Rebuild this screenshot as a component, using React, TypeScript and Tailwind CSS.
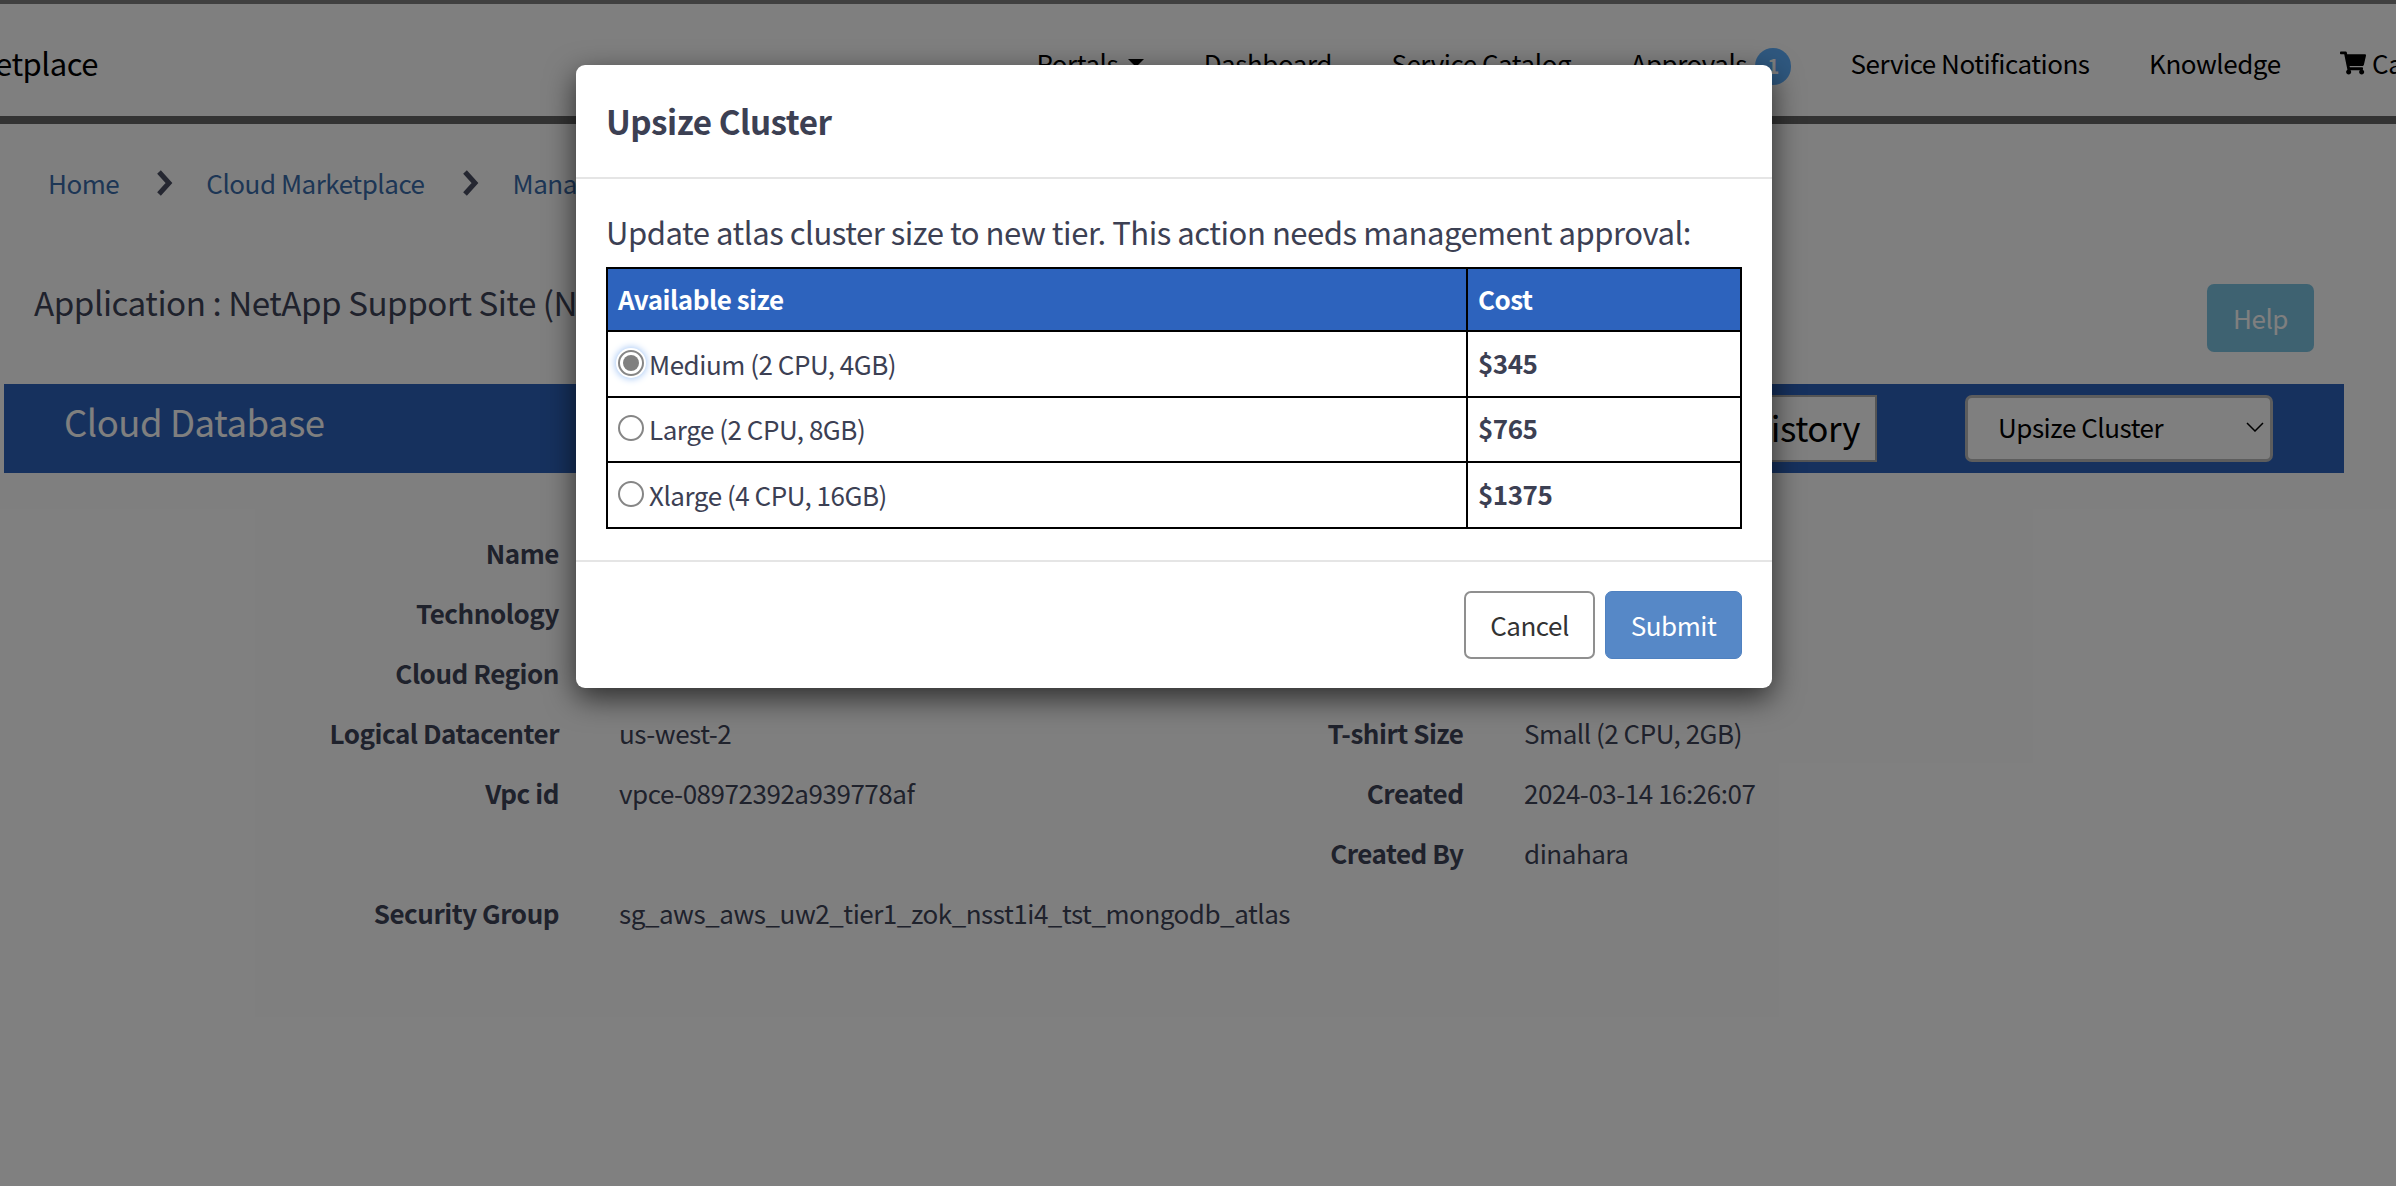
import { FaShoppingCart } from "react-icons/fa";

const navItems = ["Dashboard", "Service Catalog"];

const detailRows = [
  { label: "Name", value: "", label2: "", value2: "" },
  { label: "Technology", value: "", label2: "", value2: "" },
  { label: "Cloud Region", value: "", label2: "", value2: "" },
  { label: "Logical Datacenter", value: "us-west-2", label2: "T-shirt Size", value2: "Small (2 CPU, 2GB)" },
  { label: "Vpc id", value: "vpce-08972392a939778af", label2: "Created", value2: "2024-03-14 16:26:07" },
  { label: "", value: "", label2: "Created By", value2: "dinahara" },
  { label: "Security Group", value: "sg_aws_aws_uw2_tier1_zok_nsst1i4_tst_mongodb_atlas", label2: "", value2: "" },
];

const sizes = [
  { name: "Medium (2 CPU, 4GB)", cost: "$345", selected: true },
  { name: "Large (2 CPU, 8GB)", cost: "$765", selected: false },
  { name: "Xlarge (4 CPU, 16GB)", cost: "$1375", selected: false },
];

function Chevron() {
  return (
    <svg width="17" height="26" viewBox="0 0 17 26" className="shrink-0">
      <path d="M3 2 L13 13 L3 24" fill="none" stroke="#4a4f63" strokeWidth="5" />
    </svg>
  );
}

function Radio({ selected }: { selected: boolean }) {
  return (
    <span
      className={`mt-[4px] flex h-[26px] w-[26px] shrink-0 items-center justify-center rounded-full border-2 border-[#868686] bg-white ${
        selected ? "shadow-[0_0_0_2px_#fff,0_0_7px_3px_#a9c9f5]" : ""
      }`}
    >
      {selected && <span className="h-[16px] w-[16px] rounded-full bg-[#808080]" />}
    </span>
  );
}

function SizeModal() {
  return (
    <div className="absolute left-[576px] top-[65px] z-20 w-[1196px] rounded-[9px] bg-white text-[#3c4053] shadow-[0_10px_30px_rgba(0,0,0,0.65)]">
      <div className="flex h-[114px] items-center border-b-2 border-[#e5e5e5] pl-[30px]">
        <h2 className="text-[33.2px] font-bold leading-[40px]">Upsize Cluster</h2>
      </div>
      <div className="border-b-2 border-[#e5e5e5] px-[30px] pb-[31px]">
        <p className="pt-[33px] text-[31.05px] leading-[40px] whitespace-nowrap">
          Update atlas cluster size to new tier. This action needs management approval:
        </p>
        <table className="mt-[15px] w-[1136px] table-fixed border-collapse border-2 border-black text-[26px] leading-[36px]">
          <thead>
            <tr className="h-[63px] bg-[#2d63bd] text-white">
              <th className="w-[860px] border-2 border-black px-[10px] pb-[2px] text-left font-bold">Available size</th>
              <th className="border-2 border-black px-[10px] pb-[2px] text-left font-bold">Cost</th>
            </tr>
          </thead>
          <tbody>
            {sizes.map((size) => (
              <tr key={size.name} className="h-[65.5px]">
                <td className="border-2 border-black px-[10px]">
                  <div className="flex items-start gap-[5px]">
                    <Radio selected={size.selected} />
                    <span>{size.name}</span>
                  </div>
                </td>
                <td className="border-2 border-black px-[10px] pb-[2px] font-bold">{size.cost}</td>
              </tr>
            ))}
          </tbody>
        </table>
      </div>
      <div className="flex justify-end gap-[10px] px-[30px] py-[29px] text-[26px] leading-[36px]">
        <button className="h-[68px] w-[131px] rounded-[7px] border-2 border-[#8f8f8f] bg-white text-[#333]">Cancel</button>
        <button className="h-[68px] w-[137px] rounded-[7px] border border-[#4f81c0] bg-[#5688c7] text-white">Submit</button>
      </div>
    </div>
  );
}

export default function App() {
  return (
    <div className="relative h-[1186px] w-full overflow-hidden bg-white font-['Noto_Sans_CJK_SC','Noto_Sans',sans-serif] tracking-[-0.47px] text-[#3f4459]">
      <header className="flex h-[124px] items-center border-t-4 border-b-8 border-t-[#808080] border-b-[#666] pt-[6px] whitespace-nowrap text-[26px] leading-[36px] text-black">
        <div className="flex w-[98px] shrink-0 justify-end overflow-hidden text-[31px] leading-[44px]">
          <span>Cloud Marketplace</span>
        </div>
        <nav className="ml-[938.5px] flex shrink-0 items-center gap-[59.5px]">
          <span className="flex items-center gap-[10px]">
            Portals
            <span className="h-0 w-0 border-x-[8px] border-t-[8px] border-x-transparent border-t-black" />
          </span>
          {navItems.map((item) => (
            <span key={item}>{item}</span>
          ))}
          <span className="flex items-center gap-[8px]">
            Approvals
            <span className="mt-[6px] flex h-[37px] w-[36px] items-center justify-center rounded-full bg-[#5eb0ff] text-[20px] font-bold text-white">
              1
            </span>
          </span>
          <span>Service Notifications</span>
          <span>Knowledge</span>
          <span className="flex items-center gap-[6px]">
            <FaShoppingCart className="h-[26px] w-[26px]" />
            Cart
          </span>
        </nav>
      </header>

      <div className="ml-[48px] mt-[39px] flex h-[40px] items-center whitespace-nowrap text-[26px] leading-[36px] text-[#3a6cab]">
        <span>Home</span>
        <span className="ml-[37px] mr-[33px]">
          <Chevron />
        </span>
        <span>Cloud Marketplace</span>
        <span className="ml-[37px] mr-[34px]">
          <Chevron />
        </span>
        <span>Manage Services</span>
      </div>

      <div className="mt-[81px] flex h-[68px] items-start pl-[34px]">
        <h1 className="-mt-[2px] whitespace-nowrap text-[33.2px] leading-[40px]">Application : NetApp Support Site (NSS)</h1>
        <button className="ml-auto mr-[82px] h-[68px] w-[107px] rounded-[7px] bg-[#7dc4e2] text-[26px] leading-[36px] text-white">
          Help
        </button>
      </div>

      <div className="ml-[4px] mt-[32px] flex h-[89px] w-[2340px] items-center bg-[#2d63bd] pl-[60px] pr-[71px]">
        <h3 className="-mt-[14px] text-[36.5px] leading-[48px] text-white">Cloud Database</h3>
        <button className="ml-auto flex h-[67px] w-[180px] items-center justify-end border-2 border-[#aaa] bg-white pb-[4px] pr-[15px] text-[35px] leading-[48px] text-black">
          History
        </button>
        <div className="ml-[88px] flex h-[67px] w-[308px] items-center justify-between rounded-[7px] border-[3px] border-[#bbb] bg-white pb-[3px] pl-[30px] pr-[6px] text-[26px] leading-[36px] text-black">
          <span>Upsize Cluster</span>
          <svg width="18" height="10" viewBox="0 0 18 10">
            <path d="M1 1 L9 9 L17 1" fill="none" stroke="#000" strokeWidth="1.5" />
          </svg>
        </div>
      </div>

      <div className="mt-[50px] text-[26px] leading-[60px]">
        {detailRows.map((row, i) => (
          <div key={i} className="flex h-[60px] whitespace-nowrap">
            <div className="w-[559px] text-right font-bold">{row.label}</div>
            <div className="ml-[60px] w-[681px]">{row.value}</div>
            <div className="w-[163.5px] text-right font-bold">{row.label2}</div>
            <div className="ml-[60.5px]">{row.value2}</div>
          </div>
        ))}
      </div>

      <div className="absolute inset-0 z-10 bg-black/50" />
      <SizeModal />
    </div>
  );
}
